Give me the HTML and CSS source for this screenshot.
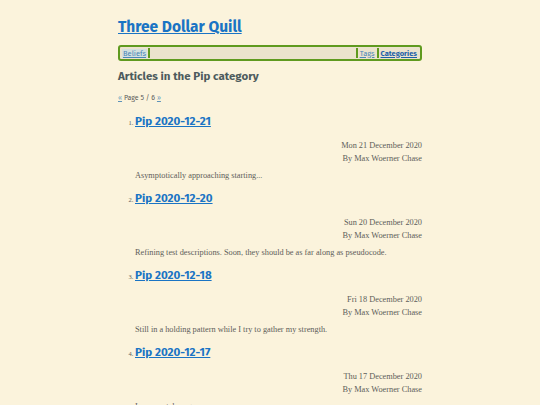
FILE: index.html
```html
<!DOCTYPE html>
<html>
<head>
<meta charset="utf-8">
<link rel="stylesheet" href="styles.css">
</head>
<body>
<div class="page">
  <h1 class="site-title"><a href="#">Three Dollar Quill</a></h1>
  <nav class="menu">
    <a class="menu-link active" href="#">Beliefs</a>
    <span class="sep"></span>
    <span class="spacer"></span>
    <span class="sep"></span>
    <a class="menu-link" href="#">Tags</a>
    <span class="sep"></span>
    <a class="menu-link current" href="#">Categories</a>
  </nav>
  <h2 class="heading">Articles in the Pip category</h2>
  <p class="pager"><a href="#">«</a> Page 5 / 6 <a href="#">»</a></p>
  <ol class="articles">
    <li class="article">
      <h3 class="article-title"><a href="#">Pip 2020-12-21</a></h3>
      <div class="meta">
        <div>Mon 21 December 2020</div>
        <div>By Max Woerner Chase</div>
      </div>
      <p class="summary">Asymptotically approaching starting...</p>
    </li>
    <li class="article">
      <h3 class="article-title"><a href="#">Pip 2020-12-20</a></h3>
      <div class="meta">
        <div>Sun 20 December 2020</div>
        <div>By Max Woerner Chase</div>
      </div>
      <p class="summary">Refining test descriptions. Soon, they should be as far along as pseudocode.</p>
    </li>
    <li class="article">
      <h3 class="article-title"><a href="#">Pip 2020-12-18</a></h3>
      <div class="meta">
        <div>Fri 18 December 2020</div>
        <div>By Max Woerner Chase</div>
      </div>
      <p class="summary">Still in a holding pattern while I try to gather my strength.</p>
    </li>
    <li class="article">
      <h3 class="article-title"><a href="#">Pip 2020-12-17</a></h3>
      <div class="meta">
        <div>Thu 17 December 2020</div>
        <div>By Max Woerner Chase</div>
      </div>
      <p class="summary">Incremental progress.</p>
    </li>
  </ol>
</div>
</body>
</html>
```
FILE: styles.css
```css
html, body {
  margin: 0;
  padding: 0;
  background: #fbf3dc;
}
body {
  font-family: "Roboto Slab", "Liberation Serif", serif;
  color: #5d5d5a;
  font-size: 8.3px;
}
.page {
  width: 304px;
  margin: 0 auto;
  padding-top: 15px;
}
.site-title {
  font-family: "Fira Sans", Lato, "Open Sans", sans-serif;
  font-size: 15.5px;
  font-weight: 700;
  margin: 0;
  line-height: 24px;
}
.site-title a, .article-title a {
  color: #1a74c4;
}
.menu {
  margin-top: 6px;
  display: flex;
  align-items: center;
  height: 12px;
  border: 2px solid #5f9a1f;
  border-radius: 3px;
  background: #ebe3cd;
  padding: 0 2px;
  font-family: "Fira Sans", Lato, "Open Sans", sans-serif;
  font-size: 7.5px;
}
.menu-link {
  color: #4a86b8;
  padding: 0 1px;
}
.menu-link.active {
  background: #d3e0de;
}
.menu-link.current {
  color: #1d5fa8;
  font-weight: 700;
}
.sep {
  width: 2px;
  height: 10px;
  background: #5f9a1f;
  margin: 0 1px;
}
.spacer {
  flex: 1;
}
.heading {
  font-family: "Fira Sans", Lato, "Open Sans", sans-serif;
  font-size: 11.5px;
  font-weight: 700;
  color: #4d5b5d;
  margin: 7px 0 0;
  line-height: 16px;
}
.pager {
  font-family: "Fira Sans", Lato, "Open Sans", sans-serif;
  margin: 9px 0 0;
  font-size: 7px;
  line-height: 10px;
}
.pager a {
  color: #5e93b9;
}
.articles {
  margin: 9px 0 0;
  padding-left: 17px;
}
.article::marker {
  font-size: 6.5px;
}
.article-title {
  font-family: "Fira Sans", Lato, "Open Sans", sans-serif;
  font-size: 11.6px;
  font-weight: 700;
  margin: 0;
  line-height: 18px;
}
.meta {
  text-align: right;
  line-height: 12.5px;
  margin-top: 10px;
}
.summary {
  margin: 5px 0 0;
  line-height: 12px;
  padding-bottom: 7px;
}
```
